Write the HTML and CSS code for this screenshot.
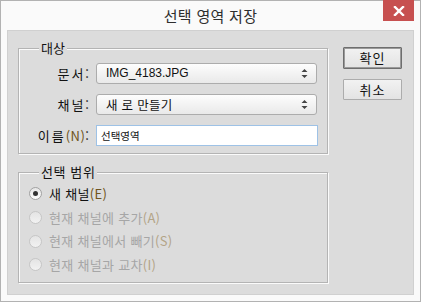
FILE: index.html
```html
<!DOCTYPE html>
<html lang="ko">
<head>
<meta charset="utf-8">
<title>선택 영역 저장</title>
<link rel="stylesheet" href="styles.css">
</head>
<body>
<div class="window">
  <div class="titlebar">
    <span class="title">선택 영역 저장</span>
    <button class="close" aria-label="닫기">
      <svg width="12" height="10" viewBox="0 0 12 10"><path d="M2 1 L10 9 M10 1 L2 9" stroke="#fff" stroke-width="2.4" stroke-linecap="square" fill="none"/></svg>
    </button>
  </div>
  <div class="panel">
    <div class="main">
      <div class="group group-target">
        <span class="legend">대상</span>
        <div class="row">
          <label class="lbl">문서:</label>
          <div class="select">
            <span class="sel-text latin">IMG_4183.JPG</span>
            <svg class="arrows" width="7" height="11" viewBox="0 0 7 11"><path d="M3.5 1 L6.5 4 L0.5 4 Z M0.5 7 L6.5 7 L3.5 10 Z" fill="#444"/></svg>
          </div>
        </div>
        <div class="row">
          <label class="lbl">채널:</label>
          <div class="select">
            <span class="sel-text">새 로 만들기</span>
            <svg class="arrows" width="7" height="11" viewBox="0 0 7 11"><path d="M3.5 1 L6.5 4 L0.5 4 Z M0.5 7 L6.5 7 L3.5 10 Z" fill="#444"/></svg>
          </div>
        </div>
        <div class="row">
          <label class="lbl">이름<span class="mn">(N)</span>:</label>
          <div class="input"><span class="input-text">선택영역</span></div>
        </div>
      </div>
      <div class="group group-range">
        <span class="legend">선택 범위</span>
        <div class="radio-row">
          <span class="radio checked"></span>
          <span class="radio-label">새 채널<span class="mn">(E)</span></span>
        </div>
        <div class="radio-row disabled">
          <span class="radio"></span>
          <span class="radio-label">현재 채널에 추가<span class="mn">(A)</span></span>
        </div>
        <div class="radio-row disabled">
          <span class="radio"></span>
          <span class="radio-label">현재 채널에서 빼기<span class="mn">(S)</span></span>
        </div>
        <div class="radio-row disabled">
          <span class="radio"></span>
          <span class="radio-label">현재 채널과 교차<span class="mn">(I)</span></span>
        </div>
      </div>
    </div>
    <div class="buttons">
      <button class="btn btn-default">확인</button>
      <button class="btn">취소</button>
    </div>
  </div>
</div>
</body>
</html>
```

FILE: styles.css
```css
* { box-sizing: border-box; }

body {
  margin: 0;
  font-family: "Noto Sans CJK KR", "Liberation Sans", sans-serif;
  color: #111;
}

.window {
  width: 421px;
  height: 302px;
  border: 1px solid #b2b2b2;
  background: #fafafa;
  display: flex;
  flex-direction: column;
}

.titlebar {
  height: 29px;
  position: relative;
  display: flex;
  justify-content: center;
  align-items: center;
}

.title {
  font-size: 15px;
  line-height: 18px;
  color: #2e2e2e;
  padding-top: 1px;
  letter-spacing: 0.3px;
}

.close {
  position: absolute;
  top: -1px;
  right: 6px;
  width: 31px;
  height: 21px;
  border: 0;
  padding: 0;
  background: #c75050;
  display: flex;
  align-items: center;
  justify-content: center;
}

.panel {
  flex: 1;
  margin: 0 6px 6px;
  background: #dcdcdc;
  border: 1px solid #d0d0d0;
  display: flex;
  align-items: flex-start;
  padding: 17px 0 0 10px;
}

.main {
  display: flex;
  flex-direction: column;
  gap: 18px;
}

.group {
  position: relative;
  width: 310px;
  border: 1px solid #b4b4b4;
  box-shadow: 1px 1px 0 #fbfbfb, inset 1px 1px 0 #fbfbfb;
}

.legend {
  position: absolute;
  top: -9px;
  left: 20px;
  padding: 0 2px;
  background: #dcdcdc;
  font-size: 13px;
  line-height: 16px;
  color: #111;
}

.group-range .legend {
  left: 20px;
  letter-spacing: 0.6px;
}

.group-target {
  height: 106px;
  padding: 14px 9px 0 0;
  display: flex;
  flex-direction: column;
  gap: 10px;
}

.row {
  display: flex;
  align-items: center;
  gap: 5px;
  height: 21px;
}

.lbl {
  width: 72px;
  text-align: right;
  font-size: 13px;
  line-height: 16px;
  letter-spacing: 2px;
  color: #111;
}

.lbl .mn { letter-spacing: 0.5px; }

.mn { color: #6e5420; }

.select {
  width: 221px;
  height: 21px;
  border: 1px solid #acacac;
  border-radius: 3px;
  background: linear-gradient(#fdfdfd, #e9e9e9);
  display: flex;
  align-items: center;
  justify-content: space-between;
  padding: 0 8px 0 9px;
}

.sel-text {
  font-size: 12.5px;
  line-height: 15px;
  color: #111;
  letter-spacing: 0.3px;
}

.sel-text.latin {
  font-family: "Liberation Sans", sans-serif;
  font-size: 12px;
  letter-spacing: 0;
}

.arrows { display: block; }

.input {
  width: 222px;
  height: 21px;
  border: 1px solid #9ec2e6;
  background: #fff;
  display: flex;
  align-items: center;
  padding-left: 4px;
}

.input-text {
  font-size: 10.5px;
  line-height: 12px;
  color: #111;
}

.group-range {
  height: 111px;
  padding: 9px 0 0 10px;
  display: flex;
  flex-direction: column;
}

.radio-row {
  height: 23.7px;
  display: flex;
  align-items: center;
  gap: 7px;
}

.radio {
  width: 13px;
  height: 13px;
  border-radius: 50%;
  border: 1px solid #a2a2a2;
  background: linear-gradient(#e6e6e6, #fdfdfd);
  display: flex;
  align-items: center;
  justify-content: center;
}

.radio.checked::after {
  content: "";
  width: 5px;
  height: 5px;
  border-radius: 50%;
  background: #333;
}

.radio-label {
  font-size: 13px;
  line-height: 16px;
  color: #111;
  letter-spacing: 0.3px;
}

.radio-row.disabled .radio {
  border-color: #c6c6c6;
  background: linear-gradient(#e4e4e4, #f2f2f2);
}

.radio-row.disabled .radio-label { color: #a6a6a6; }
.radio-row.disabled .mn { color: #b3a487; }

.buttons {
  margin: -1px 0 0 15px;
  display: flex;
  flex-direction: column;
  gap: 10px;
}

.btn {
  width: 59px;
  height: 21px;
  padding: 0;
  border: 1px solid #acacac;
  border-radius: 1px;
  background: linear-gradient(#f2f2f2, #e3e3e3);
  font-family: "Noto Sans CJK KR", sans-serif;
  font-size: 13px;
  line-height: 16px;
  color: #111;
  letter-spacing: 1px;
}

.btn-default {
  height: 22px;
  border: 1px solid #6e6e6e;
  box-shadow: inset 0 0 0 1px #9a9a9a;
}
```
